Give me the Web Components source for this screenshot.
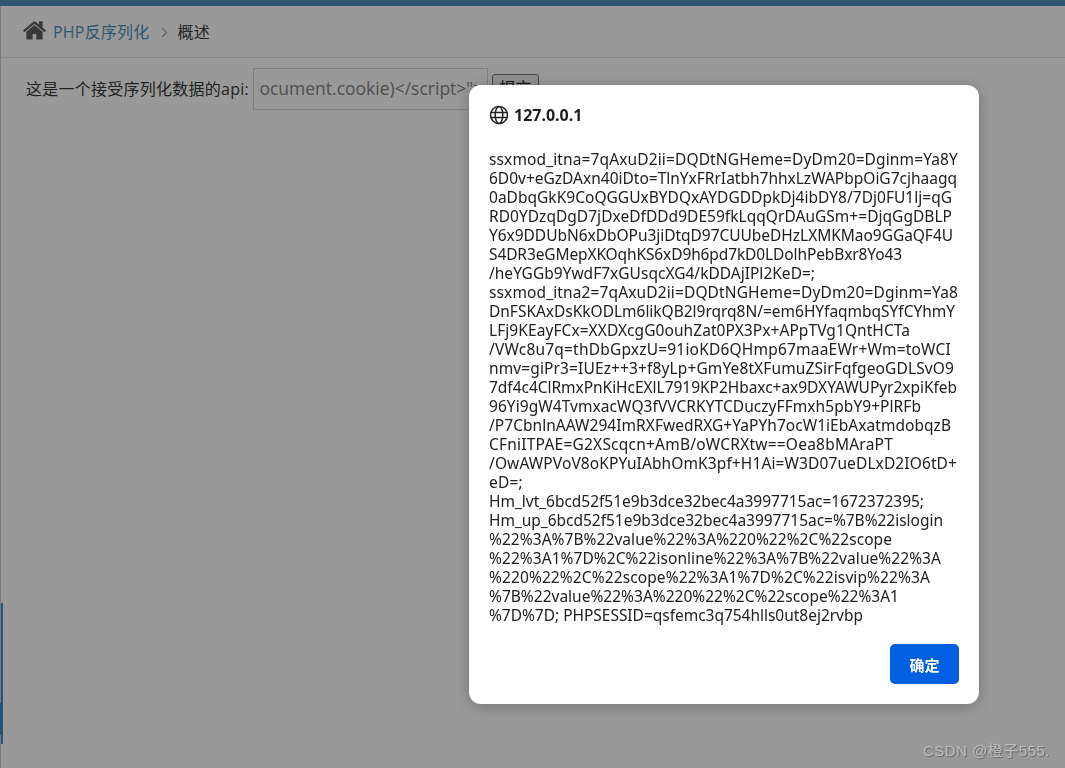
<!DOCTYPE html>
<html>
<head>
<meta charset="utf-8">
<style>
  html, body { margin: 0; height: 100%; overflow: hidden; background: #fff; }
</style>
</head>
<body>
<ace-page></ace-page>
<alert-dialog host-name="127.0.0.1" confirm="确定"></alert-dialog>
<csdn-mark>CSDN @橙子555.</csdn-mark>
<script>
const FONT = '"Open Sans", "Noto Sans", "Noto Sans CJK SC", sans-serif';

class AcePage extends HTMLElement {
  constructor() {
    super();
    this.attachShadow({ mode: "open" }).innerHTML = `
    <style>
      :host { display: flex; flex-direction: column; height: 768px; font: 16px/20px ${FONT}; color: #393939; border-left: 1px solid #ccc; box-sizing: border-box; position: relative; }
      .top { height: 6px; margin-left: -1px; background: #4e8fbd; flex: none; }
      .crumbs { height: 52px; flex: none; display: flex; align-items: center; gap: 8px; padding-left: 22px; box-sizing: border-box; border-bottom: 1px solid #e5e5e5; background: #fff; letter-spacing: .2px; }
      .crumbs a { color: #4c8fbd; }
      .crumbs svg.home { width: 23px; height: 19px; margin: -2px -1px 0 0; }
      .crumbs svg.sep { width: 7px; height: 11px; margin: 1px 1px 0 4px; }
      .content { display: flex; align-items: center; height: 44px; margin-top: 9px; padding-left: 25px; white-space: nowrap; }
      .content span { letter-spacing: .25px; }
      input { width: 235px; height: 42px; box-sizing: border-box; border: 1px solid #d5d5d5; margin-left: 4px; padding: 0 4px 2px; font: 17.500px ${FONT}; color: #858585; background: #fff; outline: none; }
      button { margin: -4px 0 0 4px; height: 27px; width: 47px; padding: 0; border: 1px solid #767676; border-radius: 3px; background: #efefef; font: 16px ${FONT}; color: #222; }
      .bar { position: absolute; left: 0; top: 603px; height: 141px; width: 2px; background: #3d8dcb; }
      .bar::after { content: ""; position: absolute; left: -1px; top: 100px; height: 32px; width: 3px; background: #3d8dcb; }
    </style>
    <div class="top"></div>
    <div class="crumbs">
      <svg class="home" viewBox="25 250 1620 1300"><path fill="#5e5e5e" d="M1408 992v480q0 26-19 45t-45 19h-384v-384h-256v384h-384q-26 0-45-19t-19-45v-480q0-1 .5-3t.5-3l575-474 575 474q1 2 1 6zm223-69l-62 74q-8 9-21 11h-3q-13 0-21-7l-692-577-692 577q-12 8-24 7-13-2-21-11l-62-74q-8-10-7-23.500t11-21.500l719-599q32-26 76-26t76 26l244 204v-195q0-14 9-23t23-9h192q14 0 23 9t9 23v408l219 182q10 8 11 21.500t-7 23.500z"/></svg>
      <a>PHP反序列化</a>
      <svg class="sep" viewBox="0 0 7 11"><path fill="none" stroke="#b2b6bf" stroke-width="1.600" d="M1 1l4.500 4.500L1 10"/></svg>
      <span>概述</span>
    </div>
    <div class="content">
      <span>这是一个接受序列化数据的api:</span>
      <input id="q" value="&quot;&gt;&lt;script&gt;alert(document.cookie)&lt;/script&gt;&quot;&gt;">
      <button>提交</button>
    </div>
    <div class="bar"></div>`;
  }
  connectedCallback() {
    const q = this.shadowRoot.getElementById("q");
    q.scrollLeft = 164;
  }
}
customElements.define("ace-page", AcePage);

// each line with the width it has in the alert box
const COOKIE_LINES = [
  ["ssxmod_itna=7qAxuD2ii=DQDtNGHeme=DyDm20=Dginm=Ya8Y", 469],
  ["6D0v+eGzDAxn40iDto=TlnYxFRrIatbh7hhxLzWAPbpOiG7cjhaagq", 468],
  ["0aDbqGkK9CoQGGUxBYDQxAYDGDDpkDj4ibDY8/7Dj0FU1lj=qG", 463],
  ["RD0YDzqDgD7jDxeDfDDd9DE59fkLqqQrDAuGSm+=DjqGgDBLP", 463],
  ["Y6x9DDUbN6xDbOPu3jiDtqD97CUUbeDHzLXMKMao9GGaQF4U", 464],
  ["S4DR3eGMepXKOqhKS6xD9h6pd7kD0LDolhPebBxr8Yo43", 413],
  ["/heYGGb9YwdF7xGUsqcXG4/kDDAjIPl2KeD=;", 326],
  ["ssxmod_itna2=7qAxuD2ii=DQDtNGHeme=DyDm20=Dginm=Ya8", 469],
  ["DnFSKAxDsKkODLm6likQB2l9rqrq8N/=em6HYfaqmbqSYfCYhmY", 466],
  ["LFj9KEayFCx=XXDXcgG0ouhZat0PX3Px+APpTVg1QntHCTa", 421],
  ["/VWc8u7q=thDbGpxzU=91ioKD6QHmp67maaEWr+Wm=toWCI", 462],
  ["nmv=giPr3=IUEz++3+f8yLp+GmYe8tXFumuZSirFqfgeoGDLSvO9", 465],
  ["7df4c4ClRmxPnKiHcEXlL7919KP2Hbaxc+ax9DXYAWUPyr2xpiKfeb", 468],
  ["96Yi9gW4TvmxacWQ3fVVCRKYTCDuczyFFmxh5pbY9+PlRFb", 432],
  ["/P7CbnlnAAW294ImRXFwedRXG+YaPYh7ocW1iEbAxatmdobqzB", 462],
  ["CFniITPAE=G2XScqcn+AmB/oWCRXtw==Oea8bMAraPT", 404],
  ["/OwAWPVoV8oKPYuIAbhOmK3pf+H1Ai=W3D07ueDLxD2IO6tD+", 468],
  ["eD=;", 34],
  ["Hm_lvt_6bcd52f51e9b3dce32bec4a3997715ac=1672372395;", 435],
  ["Hm_up_6bcd52f51e9b3dce32bec4a3997715ac=%7B%22islogin", 454],
  ["%22%3A%7B%22value%22%3A%220%22%2C%22scope", 403],
  ["%22%3A1%7D%2C%22isonline%22%3A%7B%22value%22%3A", 452],
  ["%220%22%2C%22scope%22%3A1%7D%2C%22isvip%22%3A", 441],
  ["%7B%22value%22%3A%220%22%2C%22scope%22%3A1", 410],
  ["%7D%7D; PHPSESSID=qsfemc3q754hlls0ut8ej2rvbp", 374],
];

class AlertDialog extends HTMLElement {
  constructor() {
    super();
    this.attachShadow({ mode: "open" });
  }
  connectedCallback() {
    const rows = COOKIE_LINES.map(([text]) => `<div>${text}</div>`).join("");
    this.shadowRoot.innerHTML = `
    <style>
      :host { display: flex; justify-content: flex-start; position: fixed; inset: 0; background: rgba(0,0,0,.4); padding: 85px 0 0 469px; box-sizing: border-box; }
      .box { width: 510px; height: 619px; box-sizing: border-box; background: #fff; border-radius: 12px; box-shadow: 0 2px 16px rgba(0,0,0,.25); padding: 20px; display: flex; flex-direction: column; font: 15.500px/19px "Noto Sans", "Open Sans", sans-serif; color: #202124; }
      .head { display: flex; align-items: center; gap: 5px; height: 20px; font-weight: 700; font-size: 16px; color: #1f1f1f; }
      .head svg { width: 20px; height: 20px; flex: none; }
      .msg { margin-top: 25px; white-space: pre; }
      .msg div { height: 19px; }
      .foot { margin-top: auto; display: flex; justify-content: flex-end; }
      button { width: 69px; height: 40px; border: 0; border-radius: 5px; background: #0060df; color: #fff; font: 700 15px "Noto Sans CJK SC", sans-serif; padding: 0; }
    </style>
    <div class="box">
      <div class="head">
        <svg viewBox="0 0 20 20" fill="none" stroke="#222" stroke-width="1.500"><circle cx="10" cy="10" r="8.500"/><ellipse cx="10" cy="10" rx="3.800" ry="8.500"/><path d="M1.500 7.500h17M1.500 12.500h17"/></svg>
        <span>${this.getAttribute("host-name")}</span>
      </div>
      <div class="msg">${rows}</div>
      <div class="foot"><button>${this.getAttribute("confirm")}</button></div>
    </div>`;

    // fit every line to its width
    const range = document.createRange();
    this.shadowRoot.querySelectorAll(".msg div").forEach((row, i) => {
      range.selectNodeContents(row);
      const gap = COOKIE_LINES[i][1] - range.getBoundingClientRect().width;
      row.style.letterSpacing = (gap / row.textContent.length).toFixed(3) + "px";
    });
  }
}
customElements.define("alert-dialog", AlertDialog);

class CsdnMark extends HTMLElement {
  constructor() {
    super();
    this.attachShadow({ mode: "open" }).innerHTML = `
    <style>
      :host { position: fixed; right: 15px; bottom: 8px; font: 15px/18px "Liberation Sans", "Noto Sans CJK SC", sans-serif; color: #bdbdbd; text-shadow: 1px 1px 1px #666; letter-spacing: .5px; }
    </style>
    <slot></slot>`;
  }
}
customElements.define("csdn-mark", CsdnMark);
</script>
</body>
</html>
